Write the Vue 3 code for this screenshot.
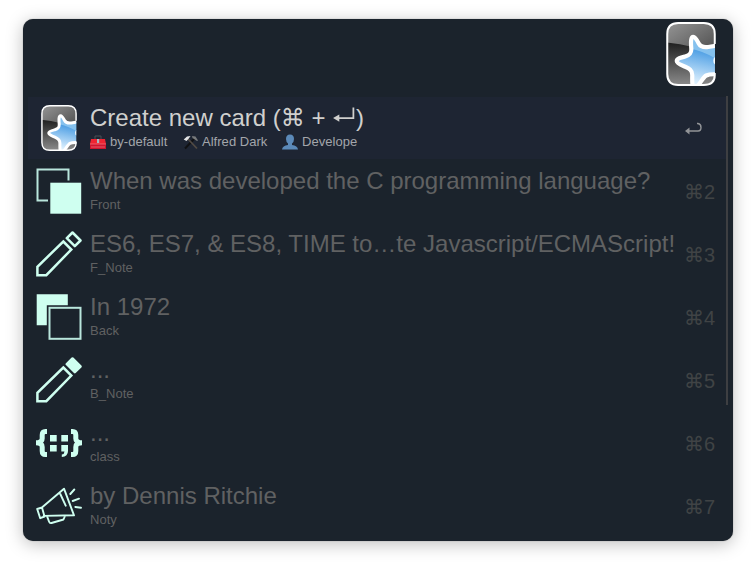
<script setup>
const rows = [
  { icon: 'anki', title: 'Create new card', sub: '', key: '' },
  { icon: 'front', title: 'When was developed the C programming language?', sub: 'Front', key: '2' },
  { icon: 'pencil', title: 'ES6, ES7, & ES8, TIME to…te Javascript/ECMAScript!', sub: 'F_Note', key: '3' },
  { icon: 'back', title: 'In 1972', sub: 'Back', key: '4' },
  { icon: 'pencil-solid', title: '...', sub: 'B_Note', key: '5' },
  { icon: 'code', title: '...', sub: 'class', key: '6' },
  { icon: 'horn', title: 'by Dennis Ritchie', sub: 'Noty', key: '7' },
]
</script>

<template>
  <main class="stage">
    <section class="panel">
      <svg width="0" height="0" class="defs">
        <defs>
          <linearGradient id="gTop" x1="0" y1="0" x2="1" y2="1">
            <stop offset="0" stop-color="#979797" /><stop offset="1" stop-color="#484848" />
          </linearGradient>
          <linearGradient id="gLow" x1="0" y1="0" x2="0" y2="1">
            <stop offset=".3" stop-color="#1c1c1c" /><stop offset="1" stop-color="#8d8d8d" />
          </linearGradient>
          <linearGradient id="gStar" gradientUnits="userSpaceOnUse" x1="36" y1="26" x2="28" y2="62">
            <stop offset="0" stop-color="#4298e2" /><stop offset="1" stop-color="#e4f4ff" />
          </linearGradient>
          <path id="star" d="M27 14.800C29 14.800 31 18.500 32.500 21.500C34.500 25.500 38 25.500 42 25L53 23V52.500C47 52 43 52 40 53.500C36 55.500 32 66 28 66C25.500 66 26 57 26 53C26 48 23 46.500 19 44.800C15 43 10.500 41.500 10.500 39C10.500 36.500 15 35.500 19 34.500C24 33 25.500 31 25 26C24.500 20 24.500 14.800 27 14.800Z" />
          <clipPath id="cStar"><use href="#star" /></clipPath>
          <clipPath id="cCard"><rect x=".8" y=".8" width="47.900" height="62.400" rx="10" /></clipPath>
          <symbol id="anki" viewBox="0 0 49.500 64">
            <g clip-path="url(#cCard)">
              <rect width="50" height="64" fill="url(#gLow)" />
              <path d="M0 0H50V34Q28 23 0 20.500Z" fill="url(#gTop)" />
              <use href="#star" fill="url(#gStar)" />
              <path clip-path="url(#cStar)" d="M20 10H50V37Q38 29.500 24 26.500Z" fill="#85c1ee" />
              <use href="#star" fill="none" stroke="#fff" stroke-width="4.200" stroke-linejoin="round" />
              <ellipse cx="49.500" cy="38.700" rx="2.400" ry="3.800" fill="#fff" />
            </g>
            <path d="M48.500 22V12Q48.500 1 37.500 1H12Q1 1 1 12V52Q1 63 12 63H37.500Q48.500 63 48.500 53V51" fill="none" stroke="#fff" stroke-width="2" />
          </symbol>
        </defs>
      </svg>

      <header class="search">
        <svg class="logo"><use href="#anki" /></svg>
      </header>

      <div class="results">
        <ul class="list">
          <li v-for="(r, i) in rows" :key="i" class="row" :class="{ active: i === 0 }">
            <span class="icon">
              <svg v-if="r.icon === 'anki'" class="mini"><use href="#anki" /></svg>
              <svg v-else viewBox="0 0 46 46" width="46" height="46" fill="none" stroke="#cffff0" stroke-width="2">
                <template v-if="r.icon === 'front'">
                  <path d="M32.500 12.500V1.500H1.500V32.500H12" stroke-width="2" stroke="#b9e6dc" />
                  <rect x="14.300" y="14.700" width="30.900" height="31" fill="#cffff0" stroke="none" />
                </template>
                <template v-else-if="r.icon === 'back'">
                  <path d="M.7 .2H31.800V11.200H10.800V31.200H.7Z" fill="#cffff0" stroke="none" />
                  <rect x="13.500" y="13.800" width="31" height="31" stroke-width="2" stroke="#b9e6dc" />
                </template>
                <template v-else-if="r.icon.startsWith('pencil')">
                  <path d="M27.300 10.500L35.300 18.500L10.300 44.200H1.400V35.800Z" stroke-width="2.500" />
                  <path d="M30.800 7.200L36.500 1.500L44.500 9.500L38.800 15.200Z" stroke-width="2.500" stroke-linejoin="round" :fill="r.icon === 'pencil-solid' ? '#cffff0' : 'none'" />
                </template>
                <template v-else-if="r.icon === 'code'">
                  <path d="M11 11.400H9.500Q6.200 11.400 6.200 15V18.500Q6.200 22.800 0 22.800Q6.200 22.800 6.200 27V31Q6.200 34.500 9.500 34.500H11M35 11.400H36.500Q39.800 11.400 39.800 15V18.500Q39.800 22.800 46 22.800Q39.800 22.800 39.800 27V31Q39.800 34.500 36.500 34.500H35" stroke-width="5" />
                  <path d="M14 15H20.700V21.500H14ZM25.300 15H32V21.500H25.300ZM14 25H20.700V31.500H14ZM25.300 25H32V31Q32 36.500 25.800 37V34.500Q28.500 34 28.500 31.500H25.300Z" fill="#cffff0" stroke="none" />
                </template>
                <template v-else>
                  <path d="M6.200 24.300L28 5.700L38 32.300L7.700 32.900M1.200 26L6 24.500L8.500 33.500L4.200 35.200ZM24.300 11L29.700 22.700M11 33.200L13 38.500Q13.700 40.500 15.500 40L27.500 36.500L29 33M34.300 11L38.300 6.500M36.700 18L43 15.700M39.300 24L45 24.800" stroke-width="1.900" stroke-linecap="round" stroke-linejoin="round" />
                </template>
              </svg>
            </span>

            <div class="copy">
              <div class="title">
                <template v-if="i === 0">Create new card (<span class="cmd">⌘</span> + <svg class="enter" viewBox="0 0 23 19"><path d="M20.500 .5V10.500H4" fill="none" stroke="currentColor" stroke-width="1.700" /><path d="M1 10.500L7 7V14Z" fill="currentColor" /></svg>)</template>
                <template v-else>{{ r.title }}</template>
              </div>
              <div v-if="i === 0" class="sub tags">
                <span class="tag box">
                  <svg viewBox="0 0 16 14" width="16" height="14">
                    <path d="M5 4V1H11V4" fill="none" stroke="#4b5055" />
                    <path d="M1 4H15L16 9H0Z" fill="#ee2432" /><rect y="9" width="16" height="5" fill="#d0142e" />
                    <path d="M0 9H16M1 12H15" stroke="#f27b83" stroke-width=".7" /><rect x="7" y="4" width="2.200" height="4" fill="#a9b8c0" />
                  </svg>by-default</span>
                <span class="tag tools">
                  <svg viewBox="0 0 16 15" width="16" height="15">
                    <path d="M2 13.500L12 3" stroke="#101113" stroke-width="2" /><path d="M14 13.500L5 4" stroke="#514a44" stroke-width="1.800" />
                    <path d="M.7 4.500L4 1.500L7.500 1L5.800 3.500L3.500 6Z" fill="#e4e5e6" /><path d="M9 1L12.500 1.500L15 5.500L14 6L9.500 3Z" fill="#77797b" />
                  </svg>Alfred Dark</span>
                <span class="tag user">
                  <svg viewBox="0 0 16 16" width="16" height="16">
                    <path d="M4 5Q4 .5 8 .5T12 5Q12 8 10 9.500V11Q15.500 11.500 16 15.500H0Q.5 11.500 6 11V9.500Q4 8 4 5Z" fill="#5b89b8" />
                  </svg>Develope</span>
              </div>
              <div v-else class="sub">{{ r.sub }}</div>
            </div>

            <span class="shortcut">
              <svg v-if="i === 0" class="return" viewBox="0 0 18 14"><path d="M12 1.500H13Q16 2 16 5.500Q16 9 13 9H4" fill="none" stroke="#929497" stroke-width="1.400" /><path d="M0 9L4.500 5.500V12.500Z" fill="#929497" /></svg>
              <template v-else><span class="cmd">⌘</span>{{ r.key }}</template>
            </span>
          </li>
        </ul>
        <div class="scroll"></div>
      </div>
    </section>
  </main>
</template>

<style>
body { background: #fff; }
</style>

<style scoped>
.stage { width: 756px; height: 568px; padding: 19px 23px 27px; box-sizing: border-box; overflow: hidden; font-family: "Liberation Sans", "DejaVu Sans", sans-serif; }
.panel { height: 522px; border-radius: 10px; background: #1b232c; box-shadow: 0 3px 17px rgba(0,0,0,.26), 0 0 1px rgba(0,0,0,.5); overflow: hidden; width: 710px; }
.defs { display: block; }
.search { height: 77px; display: flex; justify-content: flex-end; padding: 3px 17px 0 0; box-sizing: border-box; }
.logo { width: 50px; height: 64px; }
.results { display: flex; padding: 0 5px; }
.list { list-style: none; margin: 0; padding: 1px 0 0; width: 698px; }
.row { height: 63px; display: flex; align-items: flex-start; color: #606162; }
.active { background: linear-gradient(#1e2533 62px, #1b232c 62px); color: #d0d0ce; }
.icon { width: 46px; height: 46px; margin: 8px 8px 0; display: flex; justify-content: center; flex: none; }
.mini { width: 36px; height: 46px; }
.copy { width: 594px; flex: none; padding-top: 7px; }
.title { height: 28px; font-size: 24px; line-height: 28px; white-space: nowrap; }
.sub { font-size: 13px; line-height: 16px; height: 16px; letter-spacing: .03px; margin-top: 2px; }
.tags { display: flex; color: #a3a6ab; }
.tag { display: flex; align-items: center; gap: 4px; white-space: nowrap; }
.tag svg { flex: none; }
.box { width: 93px; }
.tools { width: 99px; gap: 3px; }
.cmd { font-family: "DejaVu Sans", sans-serif; }
.enter { width: 24px; height: 20px; vertical-align: -1px; }
.shortcut { font-size: 20px; line-height: 24px; width: 36px; margin-top: 20px; color: #404345; display: flex; white-space: nowrap; }
.return { width: 18px; height: 14px; margin: 5px 0 0 1px; }
.scroll { width: 2px; height: 309px; background: #3e3f42; }
</style>
